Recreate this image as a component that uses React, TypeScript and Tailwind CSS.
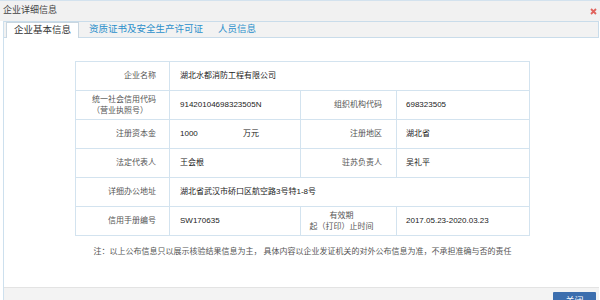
import React from 'react';

const rows: { label: React.ReactNode; value: React.ReactNode; label2?: React.ReactNode; value2?: React.ReactNode }[] = [
  { label: '企业名称', value: '湖北水都消防工程有限公司' },
  {
    label: (
      <span className="block text-left pl-[16px] leading-[11px]">
        统一社会信用代码
        <br />（营业执照号）
      </span>
    ),
    value: '91420104698323505N',
    label2: '组织机构代码',
    value2: '698323505',
  },
  {
    label: '注册资本金',
    value: (
      <span className="flex">
        <span className="w-[63px]">1000</span>
        <span>万元</span>
      </span>
    ),
    label2: '注册地区',
    value2: '湖北省',
  },
  { label: '法定代表人', value: '王会根', label2: '驻苏负责人', value2: '吴礼平' },
  { label: '详细办公地址', value: '湖北省武汉市硚口区航空路3号特1-8号' },
  {
    label: '信用手册编号',
    value: 'SW170635',
    label2: (
      <span className="block text-center leading-[11px]">
        有效期
        <br />起（打印）止时间
      </span>
    ),
    value2: '2017.05.23-2020.03.23',
  },
];

export default function App() {
  return (
    <div
      className="w-[600px] h-[300px] overflow-hidden bg-white flex flex-col text-[#333]"
      style={{ fontFamily: '"Liberation Sans", "Noto Sans CJK SC", sans-serif' }}
    >
      {/* title bar */}
      <div className="h-[21px] shrink-0 bg-[#f1f1f1] border-t border-[#d3e2ee] flex items-center justify-between pl-[3px] pr-[3px]">
        <span className="text-[9px] text-[#444]">企业详细信息</span>
        <svg width="7" height="7" viewBox="0 0 7 7">
          <path d="M1 1L6 6M6 1L1 6" stroke="#e0625c" strokeWidth="1.8" />
        </svg>
      </div>

      {/* panel */}
      <div className="flex-1 flex flex-col ml-[3px] mr-[1px] border-l border-[#cde0ee]">
        <div className="h-[17px] shrink-0 bg-[#f2f2f2] border border-l-0 border-[#c9dcea] flex items-end pl-[2px] gap-[10px]">
          <div className="h-[16px] w-[73px] bg-white border border-b-0 border-[#c9d6e0] flex items-center justify-center text-[9.5px] text-[#333] -mb-px">
            企业基本信息
          </div>
          <div className="h-[16px] flex items-center text-[9.5px] text-[#2a8fcb]">资质证书及安全生产许可证</div>
          <div className="h-[16px] flex items-center text-[9.5px] text-[#2a8fcb] ml-[5px]">人员信息</div>
        </div>

        <div className="flex-1 flex flex-col">
          <table className="ml-[71px] mt-[23px] w-[455px] border-collapse text-[8px] border border-[#c6dbeb]">
            <colgroup>
              <col className="w-[94px]" />
              <col className="w-[131px]" />
              <col className="w-[96px]" />
              <col />
            </colgroup>
            <tbody>
              {rows.map((r, i) => (
                <tr key={i} className="h-[29px]">
                  <td className="border border-[#d3e3ef] text-right pr-[13px] text-[#555]">{r.label}</td>
                  {r.label2 === undefined ? (
                    <td colSpan={3} className="border border-[#d3e3ef] pl-[10px] text-[#222]">
                      {r.value}
                    </td>
                  ) : (
                    <>
                      <td className="border border-[#d3e3ef] pl-[10px] text-[#222]">{r.value}</td>
                      <td className="border border-[#d3e3ef] text-right pr-[14px] text-[#555]">{r.label2}</td>
                      <td className="border border-[#d3e3ef] pl-[9px] text-[#222]">{r.value2}</td>
                    </>
                  )}
                </tr>
              ))}
            </tbody>
          </table>
          <p className="mt-[10px] text-center text-[8px] text-[#555] pl-[2px]">
            注：以上公布信息只以展示核验结果信息为主， 具体内容以企业发证机关的对外公布信息为准，不承担准确与否的责任
          </p>
        </div>

        {/* footer */}
        <div className="h-[13px] shrink-0 bg-[#f3f3f3] border-t border-[#e3e3e3] flex justify-end items-start pr-[3px] pt-[4px]">
          <button className="h-[18px] w-[43px] bg-[#3c6eae] text-white text-[9px] leading-[16px] rounded-[1px]">关闭</button>
        </div>
      </div>
    </div>
  );
}
